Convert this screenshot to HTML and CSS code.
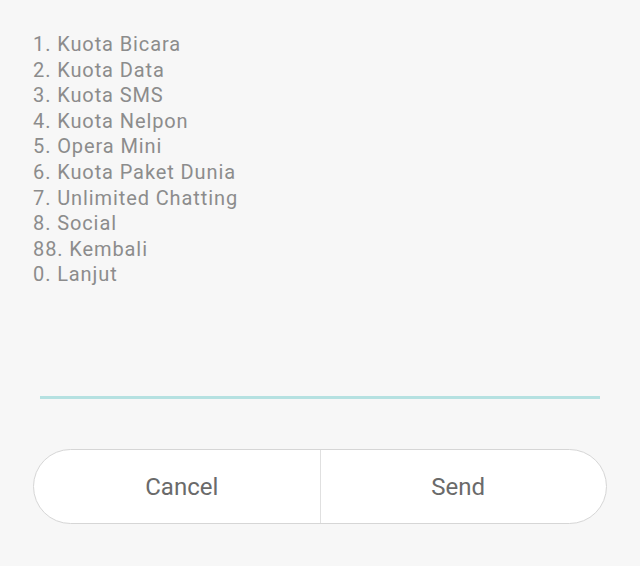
FILE: index.html
```html
<!DOCTYPE html>
<html>
<head>
<meta charset="utf-8">
<link rel="stylesheet" href="styles.css">
</head>
<body>
<div class="dialog">
  <div class="message">
    <div>1. Kuota Bicara</div>
    <div>2. Kuota Data</div>
    <div>3. Kuota SMS</div>
    <div>4. Kuota Nelpon</div>
    <div>5. Opera Mini</div>
    <div>6. Kuota Paket Dunia</div>
    <div>7. Unlimited Chatting</div>
    <div>8. Social</div>
    <div>88. Kembali</div>
    <div>0. Lanjut</div>
  </div>
  <div class="input-line"></div>
  <div class="buttons">
    <div class="btn btn-left">Cancel</div>
    <div class="btn btn-right">Send</div>
  </div>
</div>
</body>
</html>
```
FILE: styles.css
```css
html, body {
  margin: 0;
  padding: 0;
  background: #f7f7f7;
  width: 640px;
  height: 566px;
  overflow: hidden;
  font-family: Roboto, "Liberation Sans", sans-serif;
}
.dialog {
  padding: 32px 33px 0 33px;
}
.message {
  font-size: 20px;
  line-height: 25.6px;
  letter-spacing: 0.9px;
  color: #8c8c8c;
  height: 364px;
}
.input-line {
  margin: 0 7px 0 7px;
  height: 3px;
  background: #b5e1e1;
}
.buttons {
  margin-top: 50px;
  display: flex;
  height: 73px;
  border: 1px solid #d6d6d6;
  border-radius: 38px;
  background: #ffffff;
  overflow: hidden;
}
.btn {
  flex: 1;
  display: flex;
  align-items: center;
  justify-content: center;
  font-size: 24px;
  color: #6a6a6a;
}
.btn-left {
  padding-left: 10px;
}
.btn-right {
  padding-right: 10px;
  border-left: 1px solid #e0e0e0;
}
```
